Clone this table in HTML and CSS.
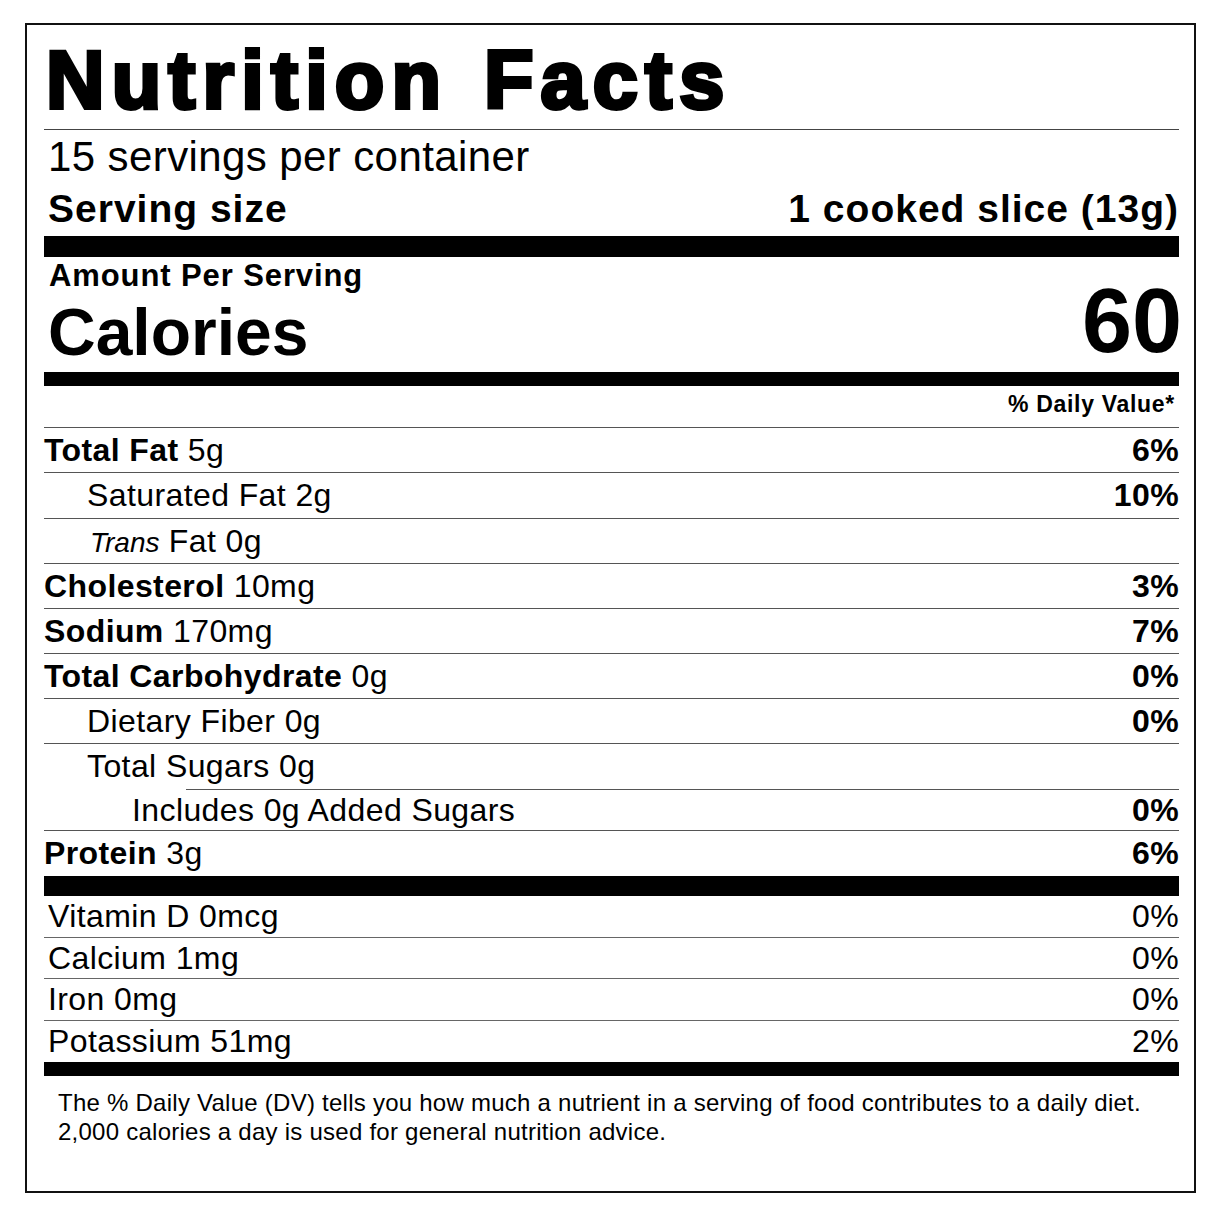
FILE: index.html
```html
<!DOCTYPE html>
<html lang="en">
<head>
<meta charset="utf-8">
<title>Nutrition Facts</title>
<link rel="stylesheet" href="styles.css">
</head>
<body>
<div class="label">
  <h1 class="title">Nutrition Facts</h1>
  <div class="servings">15 servings per container</div>
  <div class="serving-size"><span>Serving size</span><span>1 cooked slice (13g)</span></div>
  <div class="bar bar-thick"></div>
  <div class="amount">Amount Per Serving</div>
  <div class="calories"><span class="cal-label">Calories</span><span class="cal-value">60</span></div>
  <div class="bar bar-mid"></div>
  <div class="dv-head">% Daily Value*</div>

  <div class="row"><span><b>Total Fat</b> 5g</span><span class="dv">6%</span></div>
  <div class="row row-tall indent1"><span>Saturated Fat 2g</span><span class="dv">10%</span></div>
  <div class="row indent1"><span><i class="trans">Trans</i> Fat 0g</span><span class="dv"></span></div>
  <div class="row"><span><b>Cholesterol</b> 10mg</span><span class="dv">3%</span></div>
  <div class="row"><span><b>Sodium</b> 170mg</span><span class="dv">7%</span></div>
  <div class="row"><span><b>Total Carbohydrate</b> 0g</span><span class="dv">0%</span></div>
  <div class="row indent1"><span>Dietary Fiber 0g</span><span class="dv">0%</span></div>
  <div class="row row-tall row-open indent1"><span>Total Sugars 0g</span><span class="dv"></span></div>
  <div class="row row-short row-partial indent2"><span>Includes 0g Added Sugars</span><span class="dv">0%</span></div>
  <div class="row row-tall row-open"><span><b>Protein</b> 3g</span><span class="dv">6%</span></div>
  <div class="bar bar-thick2"></div>

  <div class="vit"><span>Vitamin D 0mcg</span><span>0%</span></div>
  <div class="vit vit-short"><span>Calcium 1mg</span><span>0%</span></div>
  <div class="vit"><span>Iron 0mg</span><span>0%</span></div>
  <div class="vit vit-last"><span>Potassium 51mg</span><span>2%</span></div>
  <div class="bar bar-mid"></div>

  <p class="footnote">The % Daily Value (DV) tells you how much a nutrient in a serving of food contributes to a daily diet.<br>2,000 calories a day is used for general nutrition advice.</p>
</div>
</body>
</html>
```

FILE: styles.css
```css
html, body {
  margin: 0;
  padding: 0;
  background: #fff;
}

body {
  font-family: "Liberation Sans", Arial, Helvetica, sans-serif;
  color: #000;
}

.label {
  box-sizing: border-box;
  width: 1171px;
  height: 1170px;
  margin: 23px 0 0 25px;
  border: 2px solid #111;
  padding: 0 15px 0 17px;
}

.title {
  margin: 0;
  padding: 15px 0 9px 2px;
  font-size: 81px;
  line-height: 80px;
  font-weight: 700;
  letter-spacing: 7.2px;
  word-spacing: 6px;
  -webkit-text-stroke: 4px #000;
  white-space: nowrap;
  border-bottom: 1px solid #444;
}

.servings {
  padding: 4px 0 0 4px;
  font-size: 42px;
  line-height: 46px;
  letter-spacing: 0.4px;
}

.serving-size {
  display: flex;
  justify-content: space-between;
  padding: 8px 0 6px 4px;
  font-size: 39px;
  line-height: 42px;
  font-weight: 700;
  letter-spacing: 1px;
}

.bar {
  background: #000;
}

.bar-thick {
  height: 21px;
}

.bar-thick2 {
  height: 20px;
}

.bar-mid {
  height: 14px;
}

.amount {
  padding: 4px 0 0 5px;
  font-size: 31px;
  line-height: 30px;
  font-weight: 700;
  letter-spacing: 0.9px;
}

.calories {
  display: flex;
  justify-content: space-between;
  align-items: flex-end;
  height: 81px;
  padding-left: 4px;
}

.cal-label {
  font-size: 66px;
  line-height: 50px;
  font-weight: 700;
  padding-bottom: 15px;
}

.cal-value {
  font-size: 90px;
  line-height: 64px;
  font-weight: 700;
  padding-bottom: 19px;
  margin-right: -3px;
}

.dv-head {
  padding: 5px 4px 10px 0;
  text-align: right;
  font-size: 23px;
  line-height: 26px;
  font-weight: 700;
  letter-spacing: 0.7px;
  border-bottom: 1px solid #555;
}

.row {
  display: flex;
  justify-content: space-between;
  font-size: 32px;
  line-height: 44px;
  letter-spacing: 0.4px;
  border-bottom: 1px solid #555;
  white-space: nowrap;
}

.row b,
.row .dv {
  font-weight: 700;
}

.row i {
  font-style: italic;
}

.trans {
  font-size: 28px;
  line-height: 1;
  letter-spacing: 0;
  margin-left: 3px;
}

.row-tall {
  line-height: 45px;
}

.row-short {
  line-height: 40px;
}

.row-open {
  border-bottom: none;
}

.row-partial {
  padding-top: 1px;
  background: linear-gradient(#555, #555) no-repeat 142px 0 / calc(100% - 142px) 1px;
}

.indent1 {
  padding-left: 43px;
}

.indent2 {
  padding-left: 88px;
}

.vit {
  display: flex;
  justify-content: space-between;
  padding-left: 4px;
  font-size: 32px;
  line-height: 41px;
  letter-spacing: 0.4px;
  border-bottom: 1px solid #666;
}

.vit-short {
  line-height: 40px;
}

.vit-last {
  border-bottom: none;
}

.footnote {
  margin: 0;
  padding: 12px 0 0 14px;
  font-size: 24px;
  line-height: 29px;
  letter-spacing: 0.25px;
}
```
